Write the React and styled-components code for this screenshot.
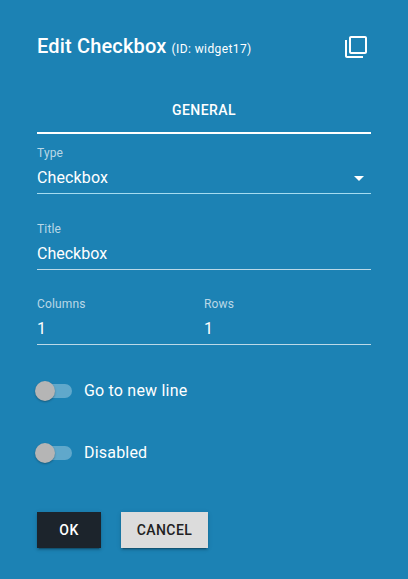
import React from 'react';
import styled, { createGlobalStyle } from 'styled-components';

const GlobalStyle = createGlobalStyle`
  * { box-sizing: border-box; }
  body {
    margin: 0;
    background: #1c82b4;
    color: #fff;
    font-family: Roboto, 'Liberation Sans', sans-serif;
  }
`;

const Dialog = styled.main`
  width: 408px;
  height: 579px;
  padding: 30px 37px 0;
  background: #1c82b4;
`;

const Header = styled.header`
  display: flex;
  align-items: center;
  justify-content: space-between;
  height: 34px;
`;

const Heading = styled.h1`
  margin: 0;
  font-size: 20px;
  line-height: 32px;
  font-weight: 500;
  letter-spacing: 0.17px;
  white-space: nowrap;
`;

const WidgetId = styled.span`
  margin-left: 5px;
  font-size: 12px;
  font-weight: 400;
  letter-spacing: 0.4px;
`;

const IconButton = styled.button`
  display: flex;
  margin: 0 3px 0 0;
  padding: 0;
  border: 0;
  background: none;
  color: inherit;
`;

const Tab = styled.div`
  height: 48px;
  margin-top: 22px;
  border-bottom: 2px solid #fff;
  font-size: 14px;
  font-weight: 500;
  line-height: 48px;
  letter-spacing: 0.45px;
  text-align: center;
`;

const Field = styled.div`
  flex: 1;
  height: ${(p) => p.$height}px;
  padding-top: ${(p) => p.$top}px;
  border-bottom: 1px solid ${(p) => p.$line || '#bbd9e8'};
`;

const Label = styled.div`
  height: 16px;
  color: rgba(255, 255, 255, 0.7);
  font-size: 12px;
  line-height: 16px;
  letter-spacing: 0.15px;
`;

const Value = styled.div`
  display: flex;
  align-items: center;
  justify-content: space-between;
  height: 24px;
  margin-top: 5px;
  font-size: 16px;
  line-height: 24px;
  letter-spacing: ${(p) => p.$spacing || 0}px;
`;

const FieldRow = styled.div`
  display: flex;
`;

const Toggles = styled.div`
  display: grid;
  gap: 38px;
  margin-top: 34px;
`;

const ToggleRow = styled.label`
  display: flex;
  align-items: center;
  height: 24px;
  font-size: 16px;
  line-height: 24px;
  letter-spacing: 0.2px;
`;

const Track = styled.span`
  display: flex;
  align-items: center;
  width: 36px;
  height: 14px;
  margin: 0 12px 0 -1px;
  border-radius: 7px;
  background: #60a8cb;
`;

const Knob = styled.span`
  flex: none;
  width: 20px;
  height: 20px;
  margin-left: -1px;
  border-radius: 50%;
  background: #b5b5b5;
  box-shadow: 0 1px 2px rgba(0, 0, 0, 0.3);
`;

const Actions = styled.footer`
  display: flex;
  gap: 20px;
  margin-top: 47px;
`;

const Button = styled.button`
  width: ${(p) => p.$width}px;
  height: 36px;
  padding: 0;
  border: 0;
  background: ${(p) => (p.$primary ? '#1c242c' : '#dcdcdc')};
  color: ${(p) => (p.$primary ? '#fff' : '#212121')};
  font-family: inherit;
  font-size: 14px;
  font-weight: 500;
  line-height: 36px;
  letter-spacing: 0.42px;
  box-shadow: 0 3px 1px -2px rgba(0, 0, 0, 0.2), 0 2px 2px rgba(0, 0, 0, 0.14),
    0 1px 5px rgba(0, 0, 0, 0.12);
`;

const Glyph = styled.svg`
  display: block;
  flex: none;
  width: 24px;
  height: 24px;
  fill: currentColor;
`;

function Toggle({ children }) {
  return (
    <ToggleRow>
      <Track><Knob /></Track>
      {children}
    </ToggleRow>
  );
}

export default function App() {
  return (
    <>
      <GlobalStyle />
      <Dialog>
        <Header>
          <Heading>Edit Checkbox<WidgetId>(ID: widget17)</WidgetId></Heading>
          <IconButton aria-label="Duplicate">
            <Glyph viewBox="0 0 24 24">
              <path d="M3 5H1v16c0 1.1.9 2 2 2h16v-2H3V5zm18-4H7c-1.1 0-2 .9-2 2v14c0 1.1.9 2 2 2h14c1.1 0 2-.9 2-2V3c0-1.1-.9-2-2-2zm0 16H7V3h14v14z" />
            </Glyph>
          </IconButton>
        </Header>
        <Tab>GENERAL</Tab>
        <Field $height={60} $top={11} $line="#a5dcf0">
          <Label>Type</Label>
          <Value $spacing={0.13}>
            Checkbox
            <Glyph viewBox="0 0 24 24"><path d="M7 10l5 5 5-5z" /></Glyph>
          </Value>
        </Field>
        <Field $height={76} $top={27}>
          <Label>Title</Label>
          <Value>Checkbox</Value>
        </Field>
        <FieldRow>
          <Field $height={75} $top={26}>
            <Label>Columns</Label>
            <Value>1</Value>
          </Field>
          <Field $height={75} $top={26}>
            <Label>Rows</Label>
            <Value>1</Value>
          </Field>
        </FieldRow>
        <Toggles>
          <Toggle>Go to new line</Toggle>
          <Toggle>Disabled</Toggle>
        </Toggles>
        <Actions>
          <Button $primary $width={64}>OK</Button>
          <Button $width={87}>CANCEL</Button>
        </Actions>
      </Dialog>
    </>
  );
}
